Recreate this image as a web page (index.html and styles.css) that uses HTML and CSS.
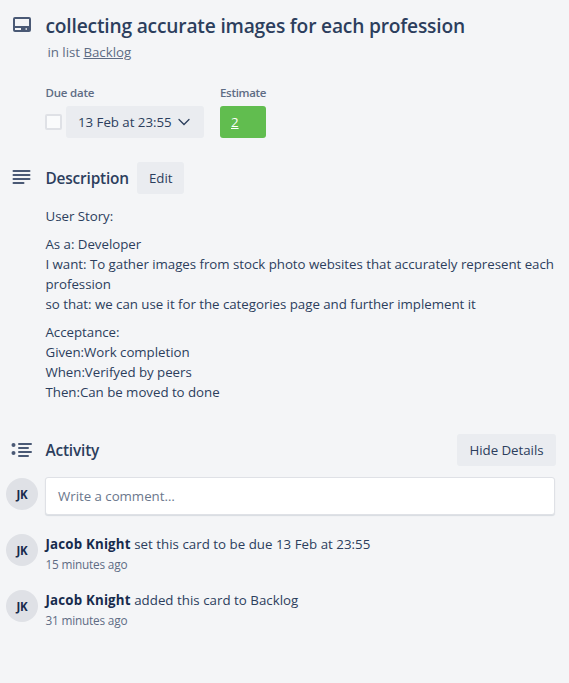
FILE: index.html
```html
<!DOCTYPE html>
<html lang="en">
<head>
<meta charset="utf-8">
<title>Card details</title>
<link rel="stylesheet" href="styles.css">
</head>
<body>
<main class="card">
  <header class="row card-header">
    <svg class="icon" viewBox="0 0 24 24" width="24" height="24"><path fill="currentColor" fill-rule="evenodd" d="M5 5h14a2 2 0 0 1 2 2V18a2 2 0 0 1-2 2H5a2 2 0 0 1-2-2V7a2 2 0 0 1 2-2ZM5 7v7h14V7ZM5 16v2h6v-2ZM15.500 16.300v1.500h1.500v-1.500Z"/></svg>
    <div>
      <h1 class="title">collecting accurate images for each profession</h1>
      <p class="list-name">in list <a class="list-link">Backlog</a></p>
    </div>
  </header>
  <section class="details">
    <div>
      <h3 class="label">Due date</h3>
      <div class="due"><span class="checkbox"></span><button class="button due-button"><span>13 Feb at 23:55</span><svg class="chevron" viewBox="0 0 12 8" width="12" height="8"><path d="M1 1.500 6 6.500l5-5" fill="none" stroke="currentColor" stroke-width="1.300" stroke-linecap="round"/></svg></button></div>
    </div>
    <div>
      <h3 class="label estimate-label">Estimate</h3>
      <div class="estimate">2</div>
    </div>
  </section>
  <section class="description">
    <div class="row section-head">
      <svg class="icon" viewBox="0 0 24 24" width="24" height="24"><path d="M4.500 6h16M4.500 10h16M4.500 14h16M4.500 18h10" fill="none" stroke="currentColor" stroke-width="2" stroke-linecap="round"/></svg>
      <h2 class="heading">Description</h2>
      <button class="button edit">Edit</button>
    </div>
    <div class="text">
      <p>User Story:</p>
      <p>As a: Developer<br>I want: To gather images from stock photo websites that accurately represent each<br>profession<br>so that: we can use it for the categories page and further implement it</p>
      <p>Acceptance:<br>Given:Work completion<br>When:Verifyed by peers<br>Then:Can be moved to done</p>
    </div>
  </section>
  <section class="activity">
    <div class="row section-head">
      <svg class="icon" viewBox="0 0 24 24" width="24" height="24"><g fill="currentColor"><circle cx="4.500" cy="8" r="2"/><circle cx="4.500" cy="16" r="2"/></g><path d="M10 7h12M10 11h9M10 15h12M10 19h9" fill="none" stroke="currentColor" stroke-width="2" stroke-linecap="round"/></svg>
      <h2 class="heading">Activity</h2>
      <button class="button hide">Hide Details</button>
    </div>
    <div class="row comment-row">
      <span class="avatar">JK</span>
      <div class="comment">Write a comment…</div>
    </div>
    <div class="row event">
      <span class="avatar">JK</span>
      <div><p class="action"><b>Jacob Knight</b> set this card to be due 13 Feb at 23:55</p><p class="time">15 minutes ago</p></div>
    </div>
    <div class="row event">
      <span class="avatar">JK</span>
      <div><p class="action"><b>Jacob Knight</b> added this card to Backlog</p><p class="time">31 minutes ago</p></div>
    </div>
  </section>
</main>
</body>
</html>
```
FILE: styles.css
```css
* { box-sizing: border-box; }
body {
  margin: 0;
  background: #f4f5f7;
  color: #2c3e5d;
  font: 13.3px/20px "Open Sans", "Noto Sans", sans-serif;
  letter-spacing: -0.035px;
}
h1, h2, h3, p { margin: 0; }
.card { min-height: 683px; padding: 12px 13px 0 6px; }
.row { display: grid; grid-template-columns: 39px 1fr; }
.icon { display: block; margin-left: 3px; color: #4a5975; }
.card-header .icon { margin-left: 3.6px; }
.title { padding-left: 0.5px; font-size: 19.2px; line-height: 28px; font-weight: 600; letter-spacing: -0.19px; white-space: nowrap; }
.list-name { margin: 2px 0 0 2.5px; color: #5e6c84; }
.list-link { text-decoration: underline; }
.details { display: flex; gap: 16px; margin: 21px 0 0 39px; }
.label { height: 20px; margin-bottom: 3px; padding-left: 0.5px; font-size: 11.5px; font-weight: 600; letter-spacing: -0.2px; color: #5e6c84; line-height: 20px; }
.estimate-label { padding-left: 0; letter-spacing: -0.3px; }
.due { display: flex; align-items: center; gap: 4px; }
.checkbox { width: 17px; height: 16px; border: 2px solid #dfe1e6; border-radius: 2px; background: #fafbfc; }
.button { height: 32px; padding: 0 12px; border: 0; border-radius: 3px; background: #eaecf0; color: inherit; font: inherit; letter-spacing: inherit; white-space: nowrap; }
.due-button { display: flex; align-items: center; justify-content: space-between; width: 138px; padding-right: 14px; }
.estimate { width: 46px; height: 32px; padding-left: 11px; border-radius: 3px; background: #61bd4f; color: #fff; line-height: 32px; text-decoration: underline; }
.description { margin-top: 24px; }
.section-head { grid-template-columns: 39px auto auto 1fr; align-items: center; height: 32px; }
.section-head .icon { margin-top: -2px; }
.heading { width: 84px; padding: 2px 0 0 0.5px; font-size: 15.4px; font-weight: 600; letter-spacing: -0.18px; }
.edit { width: 47px; margin-left: 8px; justify-self: start; }
.text { margin: 12px 0 0 39.5px; white-space: nowrap; }
.text p { margin-bottom: 8px; }
.activity { margin-top: 32px; }
.hide { grid-column: 4; justify-self: end; width: 99px; }
.avatar { display: flex; align-items: center; justify-content: center; width: 32px; height: 32px; border-radius: 50%; background: #dfe1e6; color: #172b4d; font-size: 11.5px; font-weight: 700; letter-spacing: -0.3px; line-height: 21px; }
.comment-row { margin-top: 11px; }
.comment-row .avatar { margin-top: 1px; }
.comment { width: 510px; height: 38px; padding: 0 12px; border: 1px solid #dfe1e6; border-radius: 3px; background: #fff; box-shadow: 0 1px 1px rgba(9, 30, 66, .12); color: #6b778c; line-height: 37px; }
.event { height: 56px; padding-top: 19px; }
.action { padding-left: 0.5px; line-height: 20px; letter-spacing: 0.02px; }
.action b { font-weight: 700; color: #172b4d; letter-spacing: 0.18px; }
.time { padding-left: 0.5px; font-size: 11.8px; line-height: 21px; letter-spacing: -0.19px; color: #5e6c84; }
```
